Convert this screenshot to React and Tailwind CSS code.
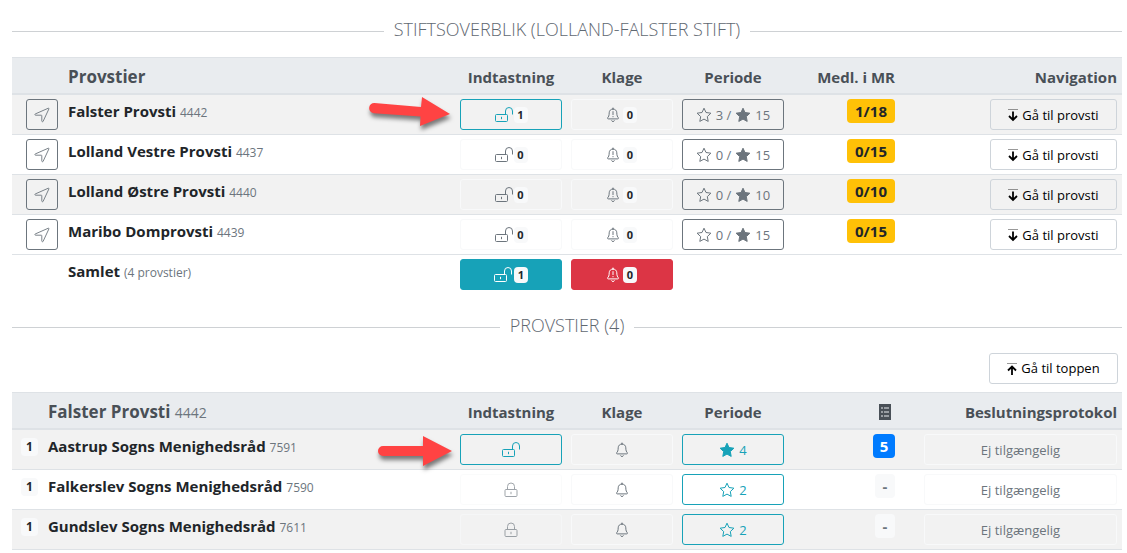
import React from "react";

const provstier = [
	{ name: "Falster Provsti", code: 4442, open: 1, klage: 0, from: 3, to: 15, members: "1/18", arrow: true },
	{ name: "Lolland Vestre Provsti", code: 4437, open: 0, klage: 0, from: 0, to: 15, members: "0/15" },
	{ name: "Lolland Østre Provsti", code: 4440, open: 0, klage: 0, from: 0, to: 10, members: "0/10" },
	{ name: "Maribo Domprovsti", code: 4439, open: 0, klage: 0, from: 0, to: 15, members: "0/15" },
];

const sogne = [
	{ name: "Aastrup Sogns Menighedsråd", code: 7591, open: true, filled: true, period: 4, protocols: 5, arrow: true },
	{ name: "Falkerslev Sogns Menighedsråd", code: 7590, open: false, filled: false, period: 2, protocols: 0 },
	{ name: "Gundslev Sogns Menighedsråd", code: 7611, open: false, filled: false, period: 2, protocols: 0 },
];

const App = () => {
	return (
		<main className="bg-white pl-3 pr-[5px] pt-[17px] font-['Open_Sans','Noto_Sans',sans-serif] text-[15px] text-[#212529]">
			<SectionTitle>STIFTSOVERBLIK (LOLLAND-FALSTER STIFT)</SectionTitle>
			<ProvstiTable />
			<div className="mt-[19px]">
				<SectionTitle>PROVSTIER (4)</SectionTitle>
			</div>
			<div className="mb-2 flex justify-end pr-1">
				<button
					type="button"
					className="flex h-[31px] w-[129px] items-center justify-center gap-1 rounded-[3px] border border-[#ced4da] bg-white text-[13px] text-black"
				>
					<ToTopIcon />
					Gå til toppen
				</button>
			</div>
			<SogneTable />
		</main>
	);
};

export default App;

const SectionTitle = ({ children }) => (
	<div className="mb-3 flex h-7 items-center gap-[10px]">
		<span className="h-px flex-1 bg-[#ced1d4]" />
		<h2 className="pb-1 text-[18px] leading-6 font-light text-[#5f6871]">{children}</h2>
		<span className="h-px flex-1 bg-[#ced1d4]" />
	</div>
);

const ProvstiTable = () => (
	<table className="w-full table-fixed border-separate border-spacing-0">
		<colgroup>
			<col className="w-[52px]" />
			<col />
			<col className="w-[111px]" />
			<col className="w-[111px]" />
			<col className="w-[111px]" />
			<col className="w-[111px]" />
			<col className="w-[222px]" />
		</colgroup>
		<thead>
			<tr className="h-[37px]">
				<Th />
				<Th className="text-left text-[17px]">Provstier</Th>
				<Th>Indtastning</Th>
				<Th>Klage</Th>
				<Th>Periode</Th>
				<Th className="text-right">Medl. i MR</Th>
				<Th className="text-right">Navigation</Th>
			</tr>
		</thead>
		<tbody>
			{provstier.map((row) => (
				<tr key={row.code} className="odd:bg-[#f2f2f2]">
					<Td className="pl-[14px]">
						<button
							type="button"
							aria-label={`Find ${row.name}`}
							className="flex h-[31px] w-8 items-center justify-center rounded-[3px] border border-[#6c757d] text-[#6c757d]"
						>
							<LocationIcon />
						</button>
					</Td>
					<Td>
						<Name name={row.name} note={row.code} />
					</Td>
					<Td className="relative pl-1">
						{row.arrow && <TiltedArrow />}
						<CellButton
							className={
								row.open
									? "gap-px border-[#17a2b8] text-[#17a2b8]"
									: "gap-px border-[#f8f9fa] text-[#6c757d]"
							}
						>
							<UnlockIcon />
							<Count>{row.open}</Count>
						</CellButton>
					</Td>
					<Td>
						<CellButton className="gap-1 border-[#f8f9fa] text-[#6c757d]">
							<BellIcon alert />
							<Count>{row.klage}</Count>
						</CellButton>
					</Td>
					<Td>
						<CellButton className="gap-1 border-[#6c757d] text-[#6c757d]">
							<StarIcon />
							<span>{row.from} /</span>
							<StarIcon filled />
							<span>{row.to}</span>
						</CellButton>
					</Td>
					<Td className="pl-1 text-right">
						<span className="inline-block h-6 w-12 rounded bg-[#ffc107] text-center leading-6 font-bold">
							{row.members}
						</span>
					</Td>
					<Td>
						<button
							type="button"
							className="ml-auto flex h-[31px] w-[127px] items-center justify-center gap-1 rounded-[3px] border border-[#ced4da] text-[13px] text-black"
						>
							<ToBottomIcon />
							Gå til provsti
						</button>
					</Td>
				</tr>
			))}
			<tr>
				<Td />
				<Td>
					<Name name="Samlet" note="(4 provstier)" />
				</Td>
				<Td>
					<CellButton className="gap-[2px] border-[#17a2b8] bg-[#17a2b8] text-white">
						<UnlockIcon />
						<Count>1</Count>
					</CellButton>
				</Td>
				<Td>
					<CellButton className="gap-1 border-[#dc3545] bg-[#dc3545] text-white">
						<BellIcon alert />
						<Count>0</Count>
					</CellButton>
				</Td>
				<Td />
				<Td />
				<Td />
			</tr>
		</tbody>
	</table>
);

const SogneTable = () => (
	<table className="w-full table-fixed border-separate border-spacing-0 border-b border-[#dee2e6]">
		<colgroup>
			<col className="w-8" />
			<col />
			<col className="w-[111px]" />
			<col className="w-[111px]" />
			<col className="w-[111px]" />
			<col className="w-[111px]" />
			<col className="w-[222px]" />
		</colgroup>
		<thead>
			<tr className="h-[37px]">
				<Th />
				<Th className="text-left text-[17px]">
					Falster Provsti <span className="text-[14px] font-normal text-[#6c757d]">4442</span>
				</Th>
				<Th>Indtastning</Th>
				<Th>Klage</Th>
				<Th>Periode</Th>
				<Th>
					<span className="flex justify-end pr-1">
						<ListIcon />
					</span>
				</Th>
				<Th className="text-right">Beslutningsprotokol</Th>
			</tr>
		</thead>
		<tbody>
			{sogne.map((row) => (
				<tr key={row.code} className="odd:bg-[#f2f2f2]">
					<Td className="pl-[9px]">
						<span className="mt-1 block h-[18px] w-[17px] rounded bg-[#f8f9fa] text-center text-[12px] leading-[18px] font-bold">
							1
						</span>
					</Td>
					<Td>
						<Name name={row.name} note={row.code} />
					</Td>
					<Td className="relative pl-1">
						{row.arrow && <StraightArrow />}
						{row.open ? (
							<CellButton className="border-[#17a2b8] text-[#17a2b8]">
								<UnlockIcon />
							</CellButton>
						) : (
							<CellButton disabled className="border-[#f8f9fa] text-[#6c757d] opacity-65">
								<LockIcon />
							</CellButton>
						)}
					</Td>
					<Td>
						<CellButton className="border-[#f8f9fa] text-[#6c757d]">
							<BellIcon />
						</CellButton>
					</Td>
					<Td>
						<CellButton className="gap-1 border-[#17a2b8] text-[#17a2b8]">
							<StarIcon filled={row.filled} />
							<span>{row.period}</span>
						</CellButton>
					</Td>
					<Td className="pl-1 text-right">
						{row.protocols ? (
							<span className="inline-block h-6 w-[22px] rounded bg-[#007bff] text-center leading-6 font-bold text-white">
								{row.protocols}
							</span>
						) : (
							<span className="inline-block h-6 w-5 rounded bg-[#f8f9fa] text-center leading-6 font-bold text-[#6c757d]">
								-
							</span>
						)}
					</Td>
					<Td>
						<button
							type="button"
							className="ml-auto flex h-[31px] w-[193px] items-center justify-center rounded-[3px] border border-[#f8f9fa] text-[13px] text-[#6c757d]"
						>
							Ej tilgængelig
						</button>
					</Td>
				</tr>
			))}
		</tbody>
	</table>
);

const Th = ({ className = "", children }) => (
	<th
		className={`border-y border-[#dee2e6] bg-[#e9ecef] pt-[3px] pr-[5px] pl-1 leading-6 font-bold text-[#495057] ${className}`}
	>
		{children}
	</th>
);

const Td = ({ className = "pl-1", children }) => (
	<td className={`h-10 border-t border-[#dee2e6] py-1 pr-[5px] align-top leading-6 ${className}`}>
		{children}
	</td>
);

const Name = ({ name, note }) => (
	<div className="whitespace-nowrap">
		<span className="font-bold">{name}</span> <span className="text-[12px] text-[#6c757d]">{note}</span>
	</div>
);

const CellButton = ({ className, children, ...props }) => (
	<button
		type="button"
		className={`flex h-[31px] w-full items-center justify-center rounded-[3px] border text-[13px] ${className}`}
		{...props}
	>
		{children}
	</button>
);

const Count = ({ children }) => (
	<span className="h-4 w-[14px] rounded bg-[#f8f9fa] text-center text-[11px] leading-4 font-bold text-[#212529]">
		{children}
	</span>
);

const LocationIcon = () => (
	<svg width="16" height="16" viewBox="0 0 16 16" fill="none" stroke="currentColor" strokeWidth="0.9" strokeLinejoin="round">
		<path d="M14.3 1.2 1.4 6.9c-.9.4-.7 1.3.2 1.3h5.7c.3 0 .5.2.5.5v5.2c0 1 1 1.2 1.4.3l5.7-12.3c.2-.5-.1-.9-.6-.7z" />
	</svg>
);

const UnlockIcon = () => (
	<svg width="18" height="16" viewBox="0 0 18 16" fill="none" stroke="currentColor">
		<rect x="0.5" y="7.5" width="12" height="7" rx="1" />
		<path d="M10.500 7.500V4a3.500 3.500 0 0 1 7 0v3.500M6.500 9.800v2.400" />
	</svg>
);

const LockIcon = () => (
	<svg width="14" height="16" viewBox="0 0 14 16" fill="none" stroke="currentColor">
		<rect x="1" y="7.5" width="12" height="7" rx="1" />
		<path d="M3.5 7.5v-3a3.5 3.5 0 0 1 7 0v3M7 9.800v2.400" />
	</svg>
);

const BellIcon = ({ alert }) => (
	<svg width="12" height="16" viewBox="0 0 12 16" fill="none" stroke="currentColor" strokeLinejoin="round" strokeLinecap="round">
		<path d="M6 1v1M6 2C3.7 2 2.2 3.7 2.2 5.8c0 3-.7 4-1.500 4.900-.4.5-.1 1.200.5 1.200h9.600c.6 0 .9-.7.5-1.200-.8-.9-1.500-1.900-1.500-4.900C9.800 3.700 8.300 2 6 2zM4.500 13.800c.3 1 2.700 1 3 0" />
		{alert && <path d="M6 4.600v3M6 9.500v.3" />}
	</svg>
);

const StarIcon = ({ filled }) => (
	<svg
		width="16"
		height="16"
		viewBox="0 0 16 16"
		fill={filled ? "currentColor" : "none"}
		stroke="currentColor"
		strokeLinejoin="round"
	>
		<path d="M8 1.200 10 5.500 14.900 6.200 11.300 9.600 12.200 14.400 8 12.100 3.800 14.400 4.700 9.600 1.100 6.200 6 5.500z" />
	</svg>
);

const ToBottomIcon = () => (
	<svg width="10" height="14" viewBox="0 0 10 14" fill="none" stroke="currentColor">
		<path d="M0 1.500h10" opacity="0.4" />
		<path d="M5 3.500v8M1 8l4 4 4-4" strokeWidth="1.8" />
	</svg>
);

const ToTopIcon = () => (
	<svg width="10" height="14" viewBox="0 0 10 14" fill="none" stroke="currentColor">
		<path d="M0 1.500h10" opacity="0.4" />
		<path d="M5 13V5M1 8.500l4-4 4 4" strokeWidth="1.8" />
	</svg>
);

const ListIcon = () => (
	<svg width="12" height="16" viewBox="0 0 12 16" role="img" aria-label="Protokoller">
		<rect width="12" height="16" fill="#495057" />
		<path d="M2 4h2M2 8h2M2 12h2M5 4h5M5 8h5M5 12h5" stroke="#e9ecef" strokeWidth="1.2" />
	</svg>
);

const TiltedArrow = () => (
	<svg
		className="pointer-events-none absolute top-0 right-full drop-shadow-[1px_4px_2px_rgba(0,0,0,0.5)]"
		width="90"
		height="38"
		viewBox="0 0 90 38"
		fill="#ff4343"
	>
		<path d="M8.500 8 55 12l1-10L84 19 54 31l.5-9.500L8 18.200a5.100 5.100 0 0 1 .5-10.200z" />
	</svg>
);

const StraightArrow = () => (
	<svg
		className="pointer-events-none absolute top-0 right-full drop-shadow-[1px_4px_2px_rgba(0,0,0,0.5)]"
		width="82"
		height="38"
		viewBox="0 0 82 38"
		fill="#ff4343"
	>
		<path d="M9 16H49V6L78 21 49 36V26H9a5 5 0 0 1 0-10z" />
	</svg>
);
